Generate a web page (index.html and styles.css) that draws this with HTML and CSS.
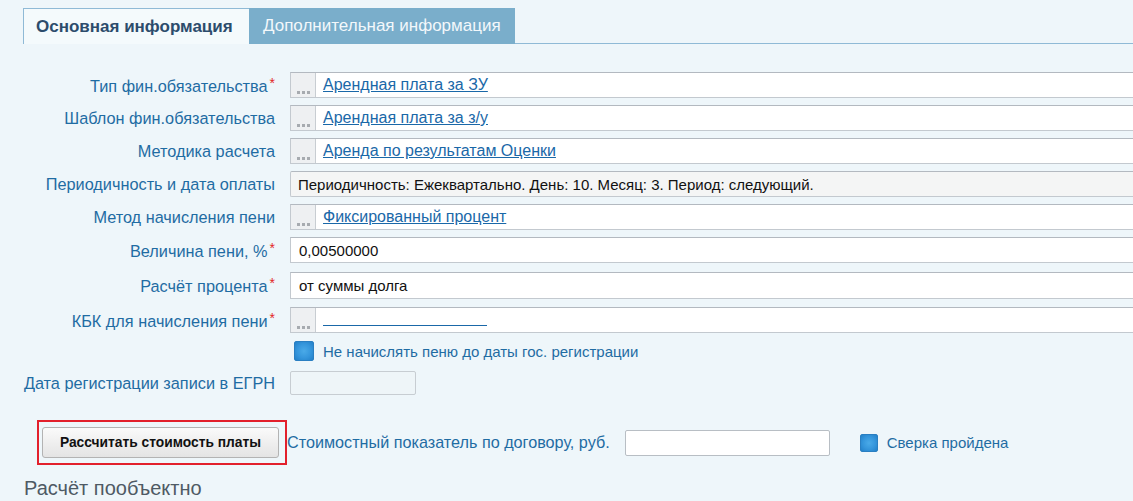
FILE: index.html
```html
<!DOCTYPE html>
<html>
    <head>
        <meta charset="utf-8">
        <title>Фин. обязательство</title>
        <link rel="stylesheet" href="styles.css">
    </head>
    <body>
        <div id="page">
            <div id="tabs">
                <div class="tab active">Основная информация</div>
                <div class="tab">Дополнительная информация</div>
                <div class="tab-rest"></div>
            </div>

            <div id="form">
                <div class="row">
                    <div class="lbl">Тип фин.обязательства<span class="req">*</span></div>
                    <div class="field lookup">
                        <span class="pick"><svg width="13" height="3" viewBox="0 0 13 3"><rect x="0" y="0" width="3" height="3" fill="#a7abb0"/><rect x="5" y="0" width="3" height="3" fill="#a7abb0"/><rect x="10" y="0" width="3" height="3" fill="#a7abb0"/></svg></span>
                        <a href="#" class="val-link">Арендная плата за ЗУ</a>
                    </div>
                </div>
                <div class="row">
                    <div class="lbl">Шаблон фин.обязательства</div>
                    <div class="field lookup">
                        <span class="pick"><svg width="13" height="3" viewBox="0 0 13 3"><rect x="0" y="0" width="3" height="3" fill="#a7abb0"/><rect x="5" y="0" width="3" height="3" fill="#a7abb0"/><rect x="10" y="0" width="3" height="3" fill="#a7abb0"/></svg></span>
                        <a href="#" class="val-link">Арендная плата за з/у</a>
                    </div>
                </div>
                <div class="row">
                    <div class="lbl">Методика расчета</div>
                    <div class="field lookup">
                        <span class="pick"><svg width="13" height="3" viewBox="0 0 13 3"><rect x="0" y="0" width="3" height="3" fill="#a7abb0"/><rect x="5" y="0" width="3" height="3" fill="#a7abb0"/><rect x="10" y="0" width="3" height="3" fill="#a7abb0"/></svg></span>
                        <a href="#" class="val-link">Аренда по результатам Оценки</a>
                    </div>
                </div>
                <div class="row">
                    <div class="lbl">Периодичность и дата оплаты</div>
                    <div class="field readonly">Периодичность: Ежеквартально. День: 10. Месяц: 3. Период: следующий.</div>
                </div>
                <div class="row">
                    <div class="lbl">Метод начисления пени</div>
                    <div class="field lookup">
                        <span class="pick"><svg width="13" height="3" viewBox="0 0 13 3"><rect x="0" y="0" width="3" height="3" fill="#a7abb0"/><rect x="5" y="0" width="3" height="3" fill="#a7abb0"/><rect x="10" y="0" width="3" height="3" fill="#a7abb0"/></svg></span>
                        <a href="#" class="val-link">Фиксированный процент</a>
                    </div>
                </div>
                <div class="row">
                    <div class="lbl">Величина пени, %<span class="req">*</span></div>
                    <div class="field text">0,00500000</div>
                </div>
                <div class="row">
                    <div class="lbl">Расчёт процента<span class="req">*</span></div>
                    <div class="field text">от суммы долга</div>
                </div>
                <div class="row">
                    <div class="lbl">КБК для начисления пени<span class="req">*</span></div>
                    <div class="field lookup">
                        <span class="pick"><svg width="13" height="3" viewBox="0 0 13 3"><rect x="0" y="0" width="3" height="3" fill="#a7abb0"/><rect x="5" y="0" width="3" height="3" fill="#a7abb0"/><rect x="10" y="0" width="3" height="3" fill="#a7abb0"/></svg></span>
                        <span class="empty-link"></span>
                    </div>
                </div>
                <div class="row check-row">
                    <div class="lbl"></div>
                    <div class="check-wrap">
                        <span class="check"></span>
                        <span class="check-text">Не начислять пеню до даты гос. регистрации</span>
                    </div>
                </div>
                <div class="row date-row">
                    <div class="lbl">Дата регистрации записи в ЕГРН</div>
                    <div class="date-input"></div>
                </div>
            </div>

            <div id="calc-row">
                <div id="calc-frame">
                    <button id="calc-btn">Рассчитать стоимость платы</button>
                </div>
                <span class="calc-lbl">Стоимостный показатель по договору, руб.</span>
                <div class="sum-input"></div>
                <div class="check-wrap sverka">
                    <span class="check"></span>
                    <span class="check-text">Сверка пройдена</span>
                </div>
            </div>

            <h2 id="per-object">Расчёт пообъектно</h2>
        </div>
    </body>
</html>
```

FILE: styles.css
```css
body {
    margin: 0px;
    padding: 0px;
    background-color: #eef6fa;
    font-family: "Liberation Sans", Arial, sans-serif;
    overflow: hidden;
}
#page {
    padding-top: 8px;
}
#tabs {
    display: flex;
    padding-left: 23px;
    height: 36px;
}
.tab {
    box-sizing: border-box;
    height: 36px;
    padding: 0px 14px;
    font-size: 17px;
    line-height: 35px;
    color: #f3f8fb;
    background-color: #7aaecb;
}
.tab.active {
    color: #2c4c6c;
    font-weight: bold;
    background-color: #f4fafc;
    border-top: solid 1px #8fbad6;
    border-left: solid 1px #8fbad6;
    padding: 0px 12px;
    width: 226px;
}
.tab-rest {
    flex: 1;
    border-bottom: solid 1px #8fbad6;
}
#form {
    margin-top: 28px;
    display: flex;
    flex-direction: column;
}
.row {
    display: flex;
    align-items: center;
    height: 26px;
    margin-bottom: 7px;
}
.lbl {
    width: 275px;
    flex-shrink: 0;
    text-align: right;
    font-size: 16.3px;
    color: #1f6ca3;
    padding-right: 15px;
    white-space: nowrap;
}
.req {
    color: #e32626;
    font-size: 14px;
    vertical-align: 4px;
    margin-left: 2px;
}
.field {
    flex: 1;
    height: 26px;
    box-sizing: border-box;
    display: flex;
    align-items: center;
    border-top: solid 1px #b3b9c0;
    border-bottom: solid 1px #c3c9cf;
    border-left: solid 1px #c3c9cf;
    background-color: white;
    font-size: 15px;
    color: #111;
}
.field.readonly {
    background-color: #f4f5f5;
    padding-left: 7px;
    border-radius: 2px 0px 0px 2px;
}
.field.text {
    padding-left: 8px;
}
.pick {
    width: 25px;
    height: 100%;
    box-sizing: border-box;
    background-color: #eef0f2;
    border-right: solid 1px #c8cdd2;
    display: flex;
    align-items: flex-end;
    justify-content: center;
    padding-bottom: 3px;
}
.val-link {
    margin-left: 7px;
    font-size: 16px;
    color: #1a68a8;
    text-decoration: underline;
}
.empty-link {
    margin-left: 7px;
    margin-top: 10px;
    width: 164px;
    border-bottom: solid 1px #1a68a8;
}
.row:nth-child(6) {
    margin-bottom: 9px;
}
.row:nth-child(7) {
    height: 27px;
    margin-bottom: 8px;
}
.row:nth-child(7) .field {
    height: 27px;
}
.check-row {
    height: 22px;
    margin-bottom: 9px;
}
.check-wrap {
    display: flex;
    align-items: center;
    padding-left: 4px;
}
.check {
    width: 20px;
    height: 20px;
    box-sizing: border-box;
    border: solid 1px #2a7fc2;
    border-radius: 2px;
    background: radial-gradient(circle, #4aaae8 0%, #3596dc 55%, #2380c8 100%);
}
.check-text {
    margin-left: 9px;
    font-size: 15px;
    color: #1f6ca3;
}
.date-row {
    height: 24px;
}
.date-input {
    width: 126px;
    height: 24px;
    box-sizing: border-box;
    border: solid 1px #c7cdd2;
    border-radius: 2px;
    background-color: #eef5f8;
}
#calc-row {
    display: flex;
    align-items: center;
    margin-top: 18px;
    padding-left: 37px;
}
#calc-frame {
    border: solid 2px #e2202c;
    padding: 5px 6px 5px 3px;
    width: 237px;
    height: 31px;
}
#calc-btn {
    width: 237px;
    height: 31px;
    border: solid 1px #b3b3b3;
    border-radius: 3px;
    background: linear-gradient(#fafafa, #e4e4e4);
    font-family: "Liberation Sans", Arial, sans-serif;
    font-weight: bold;
    font-size: 13.8px;
    color: #111;
}
.calc-lbl {
    margin-left: 0px;
    font-size: 16.2px;
    color: #1f6ca3;
}
.sum-input {
    margin-left: 15px;
    width: 205px;
    height: 26px;
    box-sizing: border-box;
    border: solid 1px #b8bec4;
    border-radius: 2px;
    background-color: white;
}
.sverka {
    margin-left: 26px;
}
.sverka .check {
    width: 18px;
    height: 18px;
}
.sverka .check-text {
    font-size: 15px;
}
#per-object {
    margin: 12px 0px 0px 24px;
    font-size: 20px;
    font-weight: normal;
    color: #4e5a64;
}
```
